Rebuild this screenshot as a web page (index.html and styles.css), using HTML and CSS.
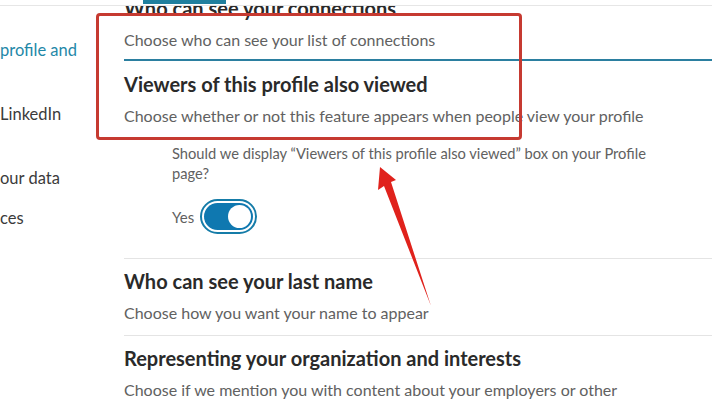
FILE: index.html
```html
<!DOCTYPE html>
<html>
<head>
<meta charset="utf-8">
<link rel="stylesheet" href="styles.css">
</head>
<body>
<div class="page">
  <nav class="sidebar">
    <div class="nav-item active">profile and</div>
    <div class="nav-item">LinkedIn</div>
    <div class="nav-item">our data</div>
    <div class="nav-item tight">ces</div>
  </nav>
  <main class="main">
    <section class="setting first">
      <h2 class="setting-title">Who can see your connections</h2>
      <p class="setting-desc">Choose who can see your list of connections</p>
    </section>
    <section class="setting open">
      <h2 class="setting-title">Viewers of this profile also viewed</h2>
      <p class="setting-desc">Choose whether or not this feature appears when people view your profile</p>
      <p class="question">Should we display “Viewers of this profile also viewed” box on your Profile page?</p>
      <div class="toggle-row">
        <span class="toggle-label">Yes</span>
        <span class="toggle"><span class="toggle-track"><span class="toggle-knob"></span></span></span>
      </div>
    </section>
    <section class="setting">
      <h2 class="setting-title">Who can see your last name</h2>
      <p class="setting-desc">Choose how you want your name to appear</p>
    </section>
    <section class="setting">
      <h2 class="setting-title">Representing your organization and interests</h2>
      <p class="setting-desc">Choose if we mention you with content about your employers or other</p>
    </section>
  </main>
</div>
<div class="topbar"><span class="tab-indicator"></span></div>
<div class="highlight-box"></div>
<svg class="arrow" width="712" height="403" viewBox="0 0 712 403">
  <polygon points="380,167 396,180 391,182 431,306 384,186 378,190" fill="#e0221c"/>
</svg>
</body>
</html>
```
FILE: styles.css
```css
* { box-sizing: border-box; }
html, body {
  margin: 0;
  padding: 0;
  background: #ffffff;
}
body {
  width: 712px;
  height: 403px;
  overflow: hidden;
  position: relative;
  font-family: "Lato", "Source Sans Pro", "Liberation Sans", sans-serif;
  color: #333333;
}
.page {
  display: flex;
  width: 712px;
}
.sidebar {
  width: 124px;
  flex: 0 0 124px;
  padding-top: 39px;
}
.nav-item {
  font-size: 16.5px;
  line-height: 22px;
  color: #3b3b3b;
  white-space: nowrap;
  margin-bottom: 42px;
}
.nav-item.active {
  color: #1f88a8;
}
.nav-item:nth-child(3) {
  margin-bottom: 18px;
}
.main {
  flex: 1;
  min-width: 0;
}
.setting {
  padding: 9px 0 11px;
  border-bottom: 1px solid #e4e4e4;
}
.setting.first {
  margin-top: -14px;
  padding-bottom: 8px;
  border-bottom: 2px solid #2b7fa0;
}
.setting.open {
  padding-top: 10px;
  padding-bottom: 24px;
}
.setting-title {
  margin: 0;
  font-size: 20px;
  line-height: 26px;
  font-weight: 700;
  color: #2a2a2a;
  white-space: nowrap;
}
.setting-desc {
  margin: 8px 0 0;
  font-size: 16px;
  line-height: 22px;
  color: #616161;
  white-space: nowrap;
}
.question {
  margin: 16px 0 0 48px;
  font-size: 14.7px;
  line-height: 20px;
  color: #616161;
  width: 500px;
}
.toggle-row {
  margin: 16px 0 0 48px;
  display: flex;
  align-items: center;
  gap: 6px;
  height: 35px;
}
.toggle-label {
  font-size: 15px;
  color: #616161;
}
.toggle {
  display: inline-flex;
  width: 57px;
  height: 35px;
  border: 2px solid #157ca8;
  border-radius: 18px;
  padding: 2px;
  background: #ffffff;
}
.toggle-track {
  flex: 1;
  display: flex;
  justify-content: flex-end;
  align-items: center;
  background: #0f78b0;
  border-radius: 14px;
  padding: 2px;
}
.toggle-knob {
  width: 23px;
  height: 23px;
  border-radius: 50%;
  background: #ffffff;
}
.topbar {
  position: absolute;
  left: 0;
  top: 0;
  width: 712px;
  height: 6px;
  background: #ffffff;
  border-bottom: 1px solid #e6e6e6;
}
.tab-indicator {
  position: absolute;
  left: 143px;
  top: 0;
  width: 83px;
  height: 4px;
  background: #1f7f9e;
}
.highlight-box {
  position: absolute;
  left: 96px;
  top: 13px;
  width: 426px;
  height: 127px;
  border: 3px solid #c63a31;
  border-radius: 4px;
}
.arrow {
  position: absolute;
  left: 0;
  top: 0;
  pointer-events: none;
}
```
